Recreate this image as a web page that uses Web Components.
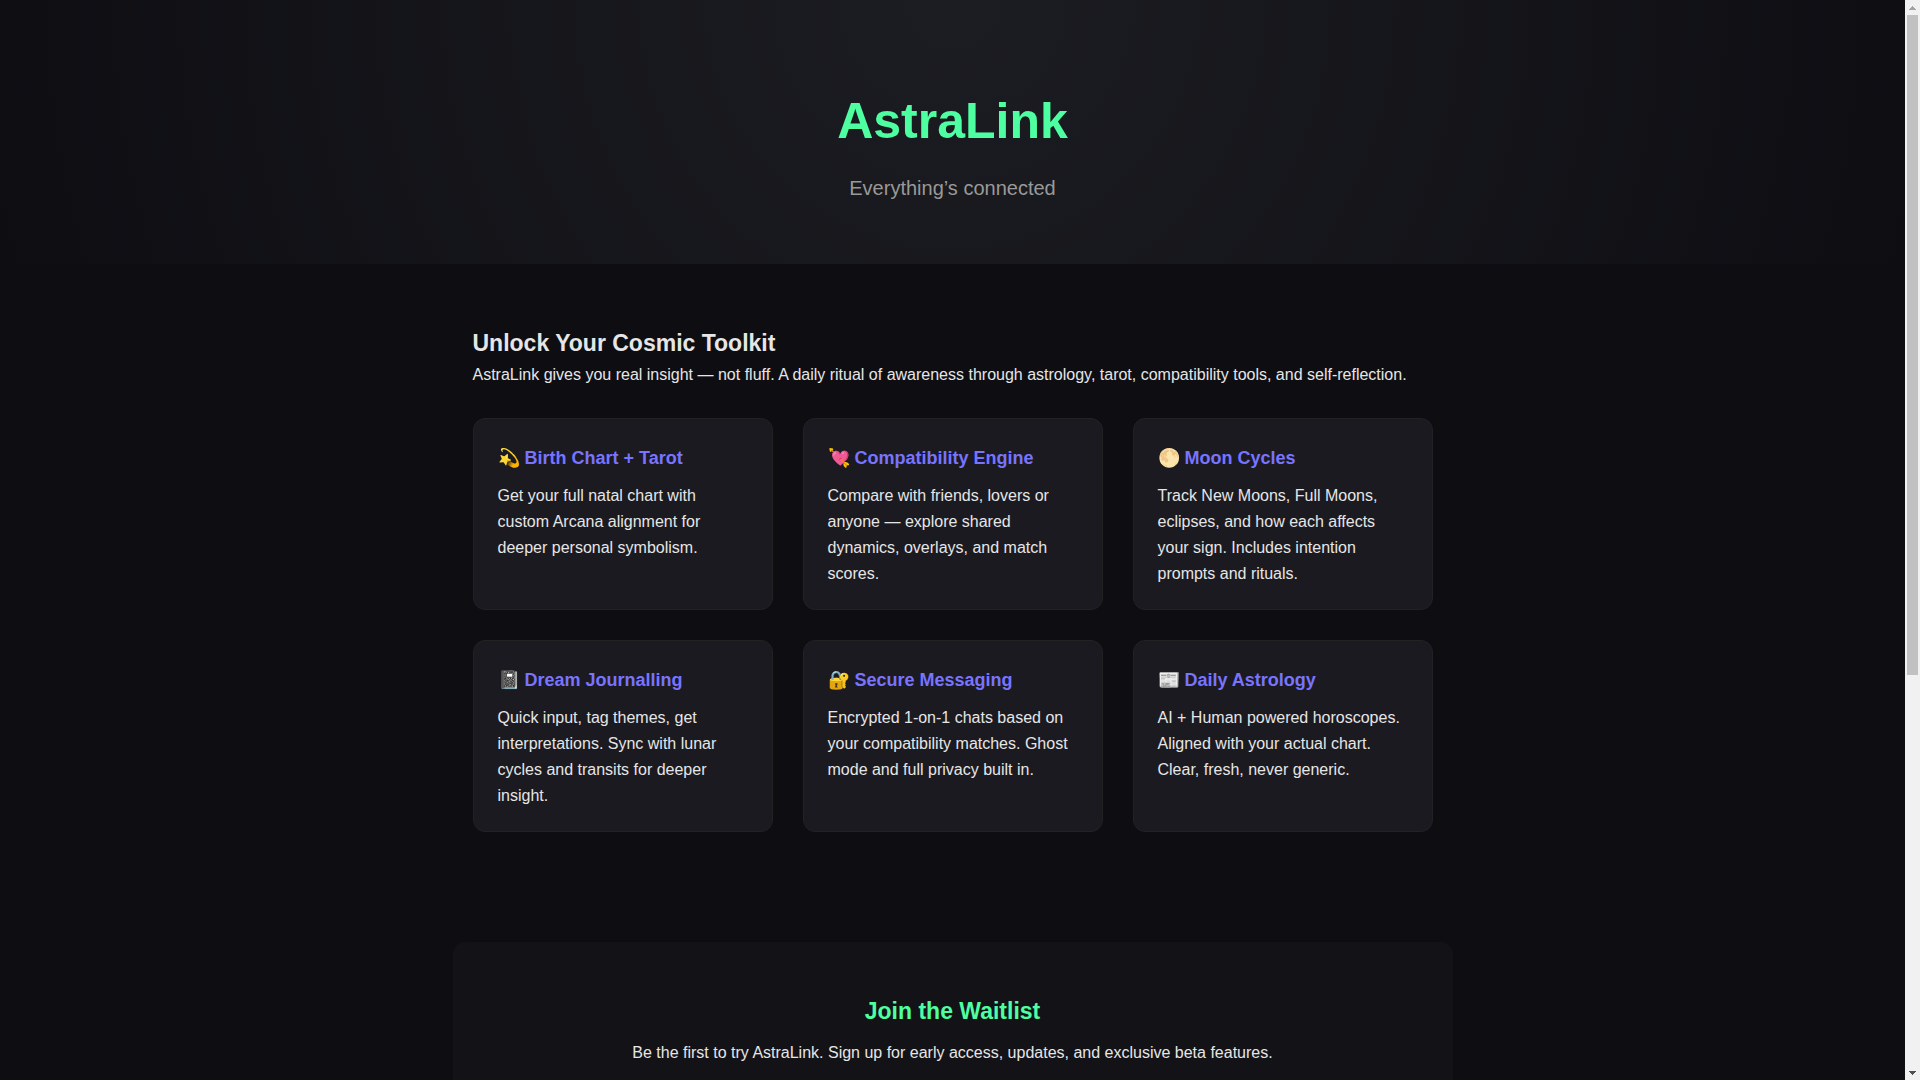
<!DOCTYPE html>
<html lang="en">
<head>
  <meta charset="UTF-8">
  <meta name="viewport" content="width=device-width, initial-scale=1">
  <title>AstraLink</title>
  <style>
    body {
      margin: 0;
      background: #0d0d12;
      color: #e6e6e6;
      font-family: "Liberation Sans", Arial, sans-serif;
      font-size: 16px;
      line-height: 26px;
    }
  </style>
</head>
<body>
  <scroll-page>
    <site-hero>
      <span slot="title">AstraLink</span>
      <span slot="tagline">Everything’s connected</span>
    </site-hero>

    <feature-section>
      <span slot="title">Unlock Your Cosmic Toolkit</span>
      <span slot="intro">AstraLink gives you real insight — not fluff. A daily ritual of awareness through astrology, tarot, compatibility tools, and self-reflection.</span>

      <feature-card heading="💫 Birth Chart + Tarot">Get your full natal chart with custom Arcana alignment for deeper personal symbolism.</feature-card>
      <feature-card heading="💘 Compatibility Engine">Compare with friends, lovers or anyone — explore shared dynamics, overlays, and match scores.</feature-card>
      <feature-card heading="🌕 Moon Cycles">Track New Moons, Full Moons, eclipses, and how each affects your sign. Includes intention prompts and rituals.</feature-card>
      <feature-card heading="📓 Dream Journalling">Quick input, tag themes, get interpretations. Sync with lunar cycles and transits for deeper insight.</feature-card>
      <feature-card heading="🔐 Secure Messaging">Encrypted 1-on-1 chats based on your compatibility matches. Ghost mode and full privacy built in.</feature-card>
      <feature-card heading="📰 Daily Astrology">AI + Human powered horoscopes. Aligned with your actual chart. Clear, fresh, never generic.</feature-card>
    </feature-section>

    <wait-list>
      <span slot="title">Join the Waitlist</span>
      Be the first to try AstraLink. Sign up for early access, updates, and exclusive beta features.
    </wait-list>
  </scroll-page>

  <script>
    class BaseElement extends HTMLElement {
      constructor() {
        super();
        this.attachShadow({ mode: 'open' });
      }

      connectedCallback() {
        const template = document.createElement('template');
        template.innerHTML = this.getTemplate();
        this.shadowRoot.replaceChildren(template.content.cloneNode(true));
      }
    }

    // scrolling page with its own scrollbar at the right edge
    class ScrollPage extends BaseElement {
      getTemplate() {
        return /* html */ `
          <style>
            :host {
              display: flex;
              height: 100vh;
            }
            .view {
              flex: 1;
              min-width: 0;
              overflow-y: auto;
              scrollbar-width: none;
            }
            .content {
              min-height: 159vh;
            }
            .bar {
              display: flex;
              flex-direction: column;
              width: 15px;
              background: #f1f1f1;
            }
            button {
              display: flex;
              align-items: center;
              justify-content: center;
              height: 15px;
              padding: 0;
              border: 0;
              background: none;
              color: #505050;
            }
            button:disabled {
              color: #a3a3a3;
            }
            .track {
              flex: 1;
              padding: 0 2px;
            }
            .thumb {
              background: #c1c1c1;
            }
          </style>
          <div class="view"><div class="content"><slot></slot></div></div>
          <div class="bar">
            <button class="up" type="button" aria-label="Scroll up">
              <svg width="7" height="4" fill="currentColor" shape-rendering="crispEdges"><path d="M3 0h1v1h1v1h1v1h1v1H0V3h1V2h1V1h1z"/></svg>
            </button>
            <div class="track"><div class="thumb"></div></div>
            <button class="down" type="button" aria-label="Scroll down">
              <svg width="7" height="4" fill="currentColor" shape-rendering="crispEdges"><path d="M0 0h7v1H6v1H5v1H4v1H3V3H2V2H1V1H0z"/></svg>
            </button>
          </div>
        `;
      }

      connectedCallback() {
        super.connectedCallback();
        const find = (selector) => this.shadowRoot.querySelector(selector);
        this.view = find('.view');
        this.track = find('.track');
        this.thumb = find('.thumb');
        this.up = find('.up');
        this.down = find('.down');

        this.up.addEventListener('click', () => this.view.scrollBy(0, -40));
        this.down.addEventListener('click', () => this.view.scrollBy(0, 40));
        this.view.addEventListener('scroll', () => this.update());
        window.addEventListener('resize', () => this.update());
        this.update();
      }

      update() {
        const { scrollTop, clientHeight, scrollHeight } = this.view;
        const scale = this.track.clientHeight / scrollHeight;
        this.thumb.style.height = `${Math.round(clientHeight * scale)}px`;
        this.thumb.style.transform = `translateY(${Math.round(scrollTop * scale)}px)`;
        this.up.disabled = scrollTop <= 0;
        this.down.disabled = scrollTop + clientHeight >= scrollHeight;
      }
    }

    class SiteHero extends BaseElement {
      getTemplate() {
        return /* html */ `
          <style>
            :host {
              display: block;
            }
            header {
              padding: 80px 20px 60px;
              background: radial-gradient(circle at top, #1c1d22, #0d0d12);
              text-align: center;
            }
            h1 {
              margin: 0 0 10px;
              color: #4effa1;
              font-size: 50px;
              line-height: 82px;
            }
            p {
              margin: 0;
              color: #999;
              font-size: 20px;
              line-height: 32px;
            }
          </style>
          <header>
            <h1><slot name="title"></slot></h1>
            <p><slot name="tagline"></slot></p>
          </header>
        `;
      }
    }

    class FeatureSection extends BaseElement {
      getTemplate() {
        return /* html */ `
          <style>
            :host {
              display: block;
            }
            section {
              max-width: 960px;
              margin: 0 auto;
              padding: 60px 20px;
            }
            h2 {
              margin: 0;
              font-size: 23px;
              line-height: 38px;
            }
            p {
              margin: 0;
            }
            .grid {
              display: grid;
              grid-template-columns: repeat(auto-fit, minmax(260px, 1fr));
              gap: 30px;
              margin-top: 30px;
            }
          </style>
          <section>
            <h2><slot name="title"></slot></h2>
            <p><slot name="intro"></slot></p>
            <div class="grid"><slot></slot></div>
          </section>
        `;
      }
    }

    class FeatureCard extends BaseElement {
      getTemplate() {
        return /* html */ `
          <style>
            :host {
              display: block;
              padding: 24px 24px 22px;
              border: 1px solid #222;
              border-radius: 12px;
              background: #1b1a20;
            }
            h3 {
              margin: 0 0 10px;
              color: #7874ff;
              font-size: 18px;
              line-height: 30px;
            }
            p {
              margin: 0;
            }
          </style>
          <h3>${this.getAttribute('heading')}</h3>
          <p><slot></slot></p>
        `;
      }
    }

    class WaitList extends BaseElement {
      getTemplate() {
        return /* html */ `
          <style>
            :host {
              display: block;
            }
            section {
              box-sizing: border-box;
              max-width: 1000px;
              margin: 50px auto;
              padding: 50px 20px;
              border-radius: 12px;
              background: #131217;
              text-align: center;
            }
            h2 {
              margin: 0 0 10px;
              color: #4effa1;
              font-size: 23px;
              line-height: 38px;
            }
            p {
              margin: 0;
            }
          </style>
          <section>
            <h2><slot name="title"></slot></h2>
            <p><slot></slot></p>
          </section>
        `;
      }
    }

    customElements.define('site-hero', SiteHero);
    customElements.define('feature-section', FeatureSection);
    customElements.define('feature-card', FeatureCard);
    customElements.define('wait-list', WaitList);
    customElements.define('scroll-page', ScrollPage);
  </script>
</body>
</html>
